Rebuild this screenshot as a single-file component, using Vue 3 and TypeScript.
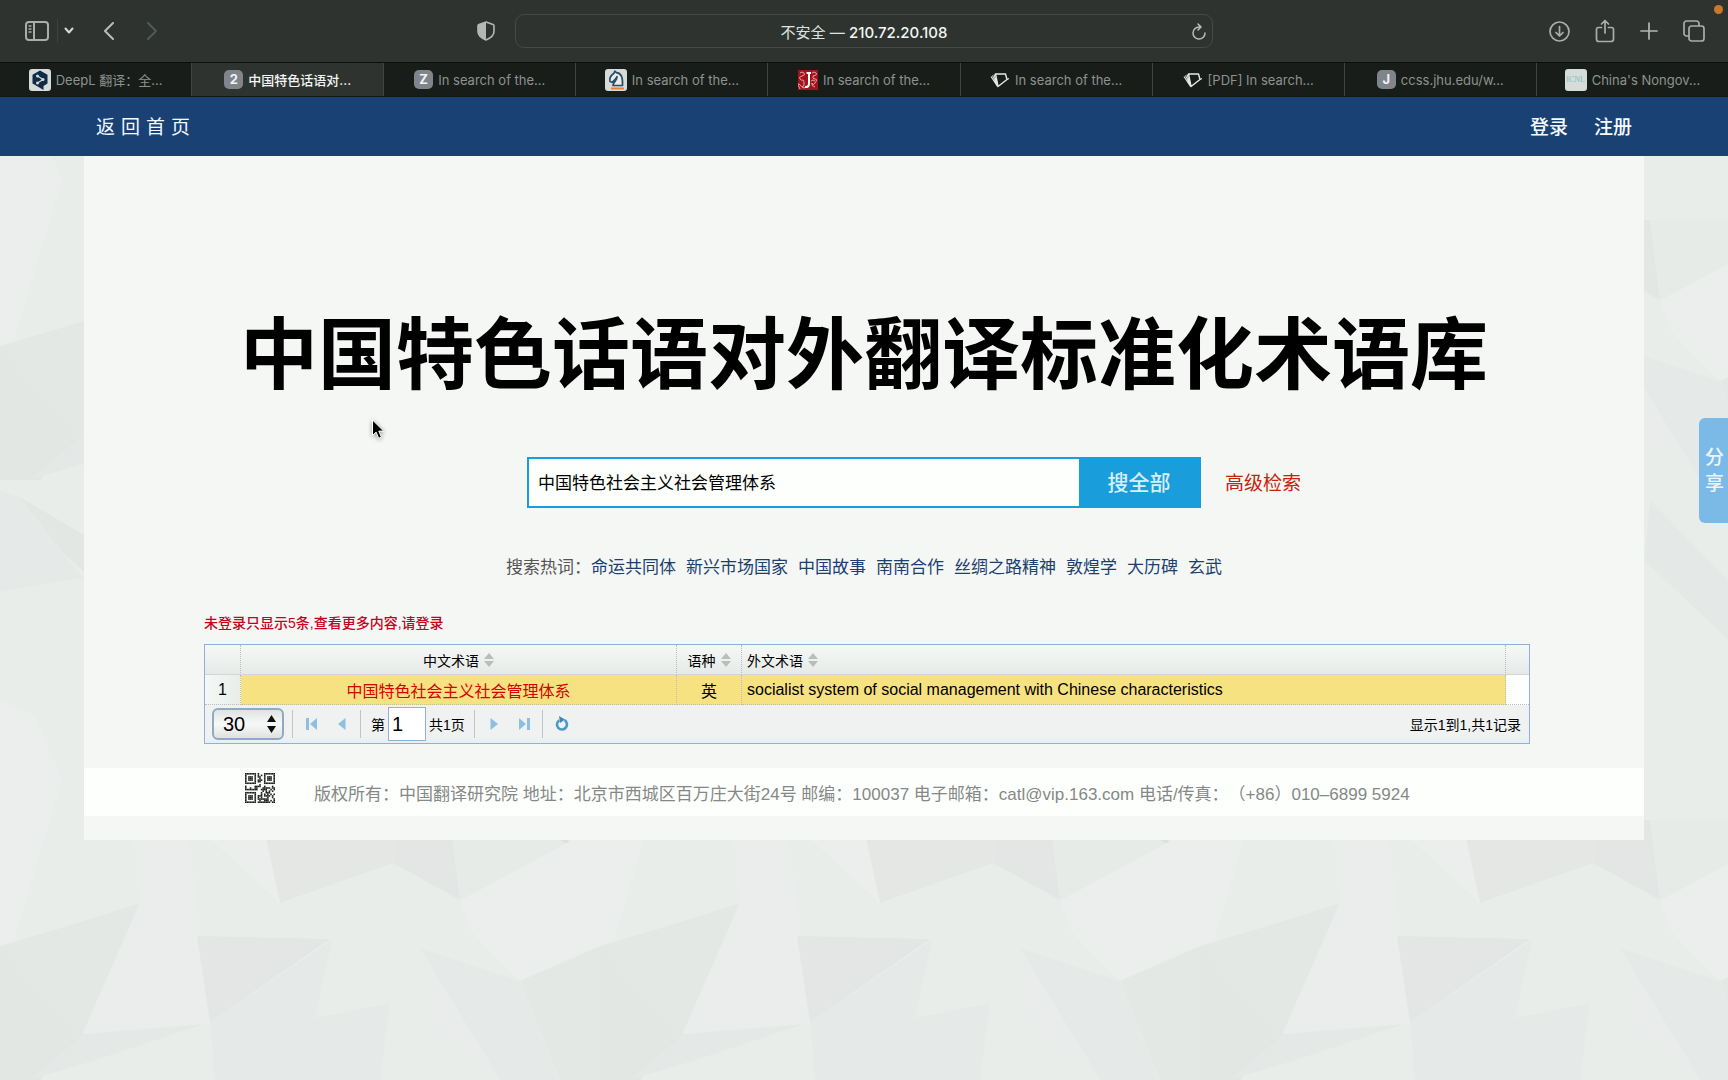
<script setup lang="ts">
import { ref } from 'vue'

interface Tab {
  label: string
  icon: 'deepl' | 'letter' | 'knight' | 'jstor' | 'book' | 'icnl'
  letter?: string
  active?: boolean
}

const tabs: Tab[] = [
  { label: 'DeepL 翻译：全...', icon: 'deepl' },
  { label: '中国特色话语对...', icon: 'letter', letter: '2', active: true },
  { label: 'In search of the...', icon: 'letter', letter: 'Z' },
  { label: 'In search of the...', icon: 'knight' },
  { label: 'In search of the...', icon: 'jstor' },
  { label: 'In search of the...', icon: 'book' },
  { label: '[PDF] In search...', icon: 'book' },
  { label: 'ccss.jhu.edu/w...', icon: 'letter', letter: 'J' },
  { label: "China's Nongov...", icon: 'icnl' },
]

const hotWords = ['命运共同体', '新兴市场国家', '中国故事', '南南合作', '丝绸之路精神', '敦煌学', '大历碑', '玄武']

const query = ref('中国特色社会主义社会管理体系')
const pageSize = ref('30')
const pageNo = ref('1')

const rows = [
  { zh: '中国特色社会主义社会管理体系', lang: '英', foreign: 'socialist system of social management with Chinese characteristics' },
]

// Paper facets of the 600 x 600 background tile
const facets = [
  { points: '0,700 34,715 62,780 14,940 0,946', fill: '#edefec' },
  { points: '0,946 84,921 140,903 84,1030 30,1080 0,1080', fill: '#e4e7e4' },
  { points: '0,946 50,1000 84,1034 40,1080 0,1080', fill: '#e2e6e3' },
  { points: '125,760 182,780 210,1022 84,1034 140,903', fill: '#ebeeeb' },
  { points: '84,1034 205,1024 90,1062 30,1080', fill: '#e4e9e6' },
  { points: '197,936 330,939 210,1022', fill: '#e2e5e2' },
  { points: '190,820 262,820 280,903', fill: '#edefec' },
  { points: '262,820 450,820 460,900 393,863 280,903', fill: '#e4e6e3' },
  { points: '393,863 400,820 450,820 460,900', fill: '#e2e5e2' },
  { points: '450,820 570,820 568,846 460,900', fill: '#e6ebe8' },
  { points: '558,838 569,838 568,845', fill: '#d9dedb' },
  { points: '568,842 600,820 600,946 520,981 470,930 460,901', fill: '#ecefec' },
  { points: '520,981 600,946 600,1080 560,1080', fill: '#e3e7e4' },
  { points: '210,1022 332,940 315,1018 390,1003 380,1080 215,1080', fill: '#e5e9e6' },
  { points: '420,948 520,981 560,1080 500,1080', fill: '#e5eae7' },
  { points: '420,950 450,1000 500,1080 430,1031', fill: '#eaedea' },
  { points: '20,497 84,535 84,572 60,550', fill: '#e3e6e3' },
  { points: '0,490 20,497 60,550 84,578 0,592', fill: '#e5e9e6' },
  { points: '450,500 528,580 528,640 444,560', fill: '#e4e9e6' },
]

// Module matrix of the small QR mark
const size = 19
const qr: { x: number; y: number }[] = []
const finder = (x: number, y: number) => {
  const edge = Math.max(Math.abs(x - 3), Math.abs(y - 3))
  return edge === 3 || edge < 2
}
let seed = 41
for (let y = 0; y < size; y++) {
  for (let x = 0; x < size; x++) {
    seed = (seed * 1103 + 12347) % 65521
    const left = x < 8
    const right = x > size - 9
    const top = y < 8
    const bottom = y > size - 9
    let on = seed % 100 < 54
    if (left && top) on = x < 7 && y < 7 && finder(x, y)
    else if (right && top) on = x > size - 8 && y < 7 && finder(x - size + 7, y)
    else if (left && bottom) on = x < 7 && y > size - 8 && finder(x, y - size + 7)
    if (on) qr.push({ x, y })
  }
}
</script>

<template>
  <div class="screen">
    <svg class="backdrop" aria-hidden="true">
      <defs>
        <pattern id="paper" x="0" y="480" width="600" height="600" patternUnits="userSpaceOnUse">
          <rect width="600" height="600" fill="#e8edea" />
          <g transform="translate(0 -480)" opacity="0.8">
            <polygon v-for="(f, i) in facets" :key="i" :points="f.points" :fill="f.fill" />
          </g>
        </pattern>
      </defs>
      <rect width="100%" height="100%" fill="url(#paper)" />
    </svg>

    <header class="browser">
      <div class="toolbar">
        <div class="tools-left">
          <button class="tool" aria-label="边栏">
            <svg width="24" height="20" viewBox="0 0 24 20" fill="none" stroke="#a9aeaa" stroke-width="2">
              <rect x="1" y="1" width="22" height="18" rx="3" />
              <path d="M9 1v18" />
              <path d="M3.500 5h3M3.500 8h3M3.500 11h3" stroke-width="1.300" />
            </svg>
          </button>
          <span class="divider"></span>
          <button class="tool chevron" aria-label="标签页组">
            <svg width="10" height="8" viewBox="0 0 10 8" fill="none" stroke="#d5d9d6" stroke-width="2" stroke-linecap="round" stroke-linejoin="round"><path d="M1.500 1.500L5 5.500l3.500-4" /></svg>
          </button>
          <button class="tool back" aria-label="后退">
            <svg width="12" height="18" viewBox="0 0 12 18" fill="none" stroke="#b9beba" stroke-width="2" stroke-linecap="round" stroke-linejoin="round"><path d="M10 1L2 9l8 8" /></svg>
          </button>
          <button class="tool forward" aria-label="前进">
            <svg width="12" height="18" viewBox="0 0 12 18" fill="none" stroke="#535955" stroke-width="2" stroke-linecap="round" stroke-linejoin="round"><path d="M2 1l8 8-8 8" /></svg>
          </button>
          <button class="tool shield" aria-label="隐私报告">
            <svg width="18" height="20" viewBox="0 0 18 20">
              <path d="M9 1l7 2.500q1 .4 1 1.500v5.500c0 4-4 6.800-8 8.500-4-1.700-8-4.500-8-8.500V5q0-1.100 1-1.500z" fill="none" stroke="#b3b8b4" stroke-width="1.600" />
              <path d="M9 1v18c-4-1.700-8-4.500-8-8.500V5q0-1.100 1-1.500z" fill="#b3b8b4" />
            </svg>
          </button>
        </div>
        <div class="address">
          <span class="address-text">不安全 — <b>210.72.20.108</b></span>
          <button class="tool reload" aria-label="重新载入">
            <svg width="14" height="17" viewBox="0 0 14 17" fill="none" stroke="#b9beba" stroke-width="1.500" stroke-linecap="round" stroke-linejoin="round"><path d="M8.500 4H7a6 6 0 1 0 6 6M6 1l3 3-3 3" /></svg>
          </button>
        </div>
        <div class="tools-right">
          <button class="tool" aria-label="下载">
            <svg width="21" height="21" viewBox="0 0 21 21" fill="none" stroke="#a9aeaa" stroke-width="1.700" stroke-linecap="round" stroke-linejoin="round"><circle cx="10.500" cy="10.500" r="9.500" /><path d="M10.500 5.500v9M7 11.500l3.500 3.500 3.500-3.500" /></svg>
          </button>
          <button class="tool" aria-label="共享">
            <svg width="20" height="24" viewBox="0 0 20 24" fill="none" stroke="#a9aeaa" stroke-width="1.700" stroke-linecap="round" stroke-linejoin="round"><path d="M6.500 8.500H3.500a2 2 0 0 0-2 2V20a2.500 2.500 0 0 0 2.500 2.500h12a2.500 2.500 0 0 0 2.500-2.500v-9.500a2 2 0 0 0-2-2h-3M10 14V1.500M6.500 5L10 1.500 13.500 5" /></svg>
          </button>
          <button class="tool" aria-label="新标签页">
            <svg width="18" height="18" viewBox="0 0 18 18" fill="none" stroke="#b3b8b4" stroke-width="1.700" stroke-linecap="round"><path d="M9 1v16M1 9h16" /></svg>
          </button>
          <button class="tool" aria-label="标签页概览">
            <svg width="22" height="22" viewBox="0 0 22 22" fill="none" stroke="#a9aeaa" stroke-width="1.700" stroke-linejoin="round"><rect x="6" y="6" width="15" height="15" rx="2.500" /><path d="M6 16H3.500A2.500 2.500 0 0 1 1 13.500v-10A2.500 2.500 0 0 1 3.500 1h10A2.500 2.500 0 0 1 16 3.500V6" /></svg>
          </button>
        </div>
        <span class="recording"></span>
      </div>

      <nav class="tabs">
        <a v-for="(tab, i) in tabs" :key="i" href="#" class="tab" :class="{ active: tab.active }">
          <span v-if="tab.icon === 'letter'" class="letter">{{ tab.letter }}</span>
          <svg v-else-if="tab.icon === 'deepl'" width="22" height="22" viewBox="0 0 22 22">
            <rect width="22" height="22" rx="3" fill="#d5dcda" />
            <path d="M11 1.500l7.500 4.300v8.700L14.500 17v4l-3.700-2.200-7.300-4.300V5.800z" fill="#0f2b46" />
            <path d="M8.500 7l5.500 3.500-5.500 3.500" fill="none" stroke="#d5dcda" stroke-width="1.200" />
            <circle cx="8.500" cy="7" r="1.500" fill="#d5dcda" /><circle cx="14" cy="10.500" r="1.500" fill="#d5dcda" /><circle cx="8.500" cy="14" r="1.500" fill="#d5dcda" />
          </svg>
          <svg v-else-if="tab.icon === 'knight'" width="22" height="22" viewBox="0 0 22 22">
            <rect width="22" height="22" rx="3" fill="#d5dcda" />
            <path d="M8 16.500c0-3 4.500-5 4-9-.8 3-3.200 4-4.700 5.800L5 12.500c-.8-3 1.500-6.500 4-8.300l.8-2 1.700 1.500c4 .3 6.500 4 6 12.800z" fill="#e9eeec" stroke="#2b4c66" stroke-width="1.700" stroke-linejoin="round" />
            <path d="M6 19.500h13" stroke="#e8803a" stroke-width="2" />
          </svg>
          <svg v-else-if="tab.icon === 'jstor'" width="20" height="20" viewBox="0 0 20 20">
            <rect width="20" height="20" fill="#a3131b" />
            <path d="M2 3q2-2 4 0t-2 3-2 3 3 1 1 4-4 1 0 4M4 17q2 2 4 0M14 3q2-2 4 0t-3 3q-1 3 2 3t0 4-3 0q-1 3 3 4M13 11q2-2 4 0" fill="none" stroke="#e3a3a3" stroke-width="1" />
            <path d="M8.500 3h4.500M11 3v10.500q0 4-4 3.500" fill="none" stroke="#fff" stroke-width="2" />
          </svg>
          <svg v-else-if="tab.icon === 'book'" width="20" height="20" viewBox="0 0 20 20" fill="none" stroke="#e6eae7" stroke-width="1.400" stroke-linejoin="round">
            <path d="M5.500 4h10l1.500 5.500L8 16.500z" />
            <path d="M4 4.500l3.500 10M2.500 5.500l5 10M1 6.500l6.500 10M17 9.500l2-1" stroke-width="1.100" />
          </svg>
          <span v-else class="icnl">ICNL</span>
          <span class="tab-label">{{ tab.label }}</span>
        </a>
      </nav>
    </header>

    <nav class="site-nav">
      <a href="#" class="home">返 回 首 页</a>
      <div class="account">
        <a href="#">登录</a>
        <a href="#">注册</a>
      </div>
    </nav>

    <main class="content">
      <h1>中国特色话语对外翻译标准化术语库</h1>

      <div class="search-row">
        <form class="search" @submit.prevent>
          <input v-model="query" type="text" aria-label="检索词" />
          <button type="submit">搜全部</button>
        </form>
        <a href="#" class="advanced">高级检索</a>
      </div>

      <div class="hot">
        <span>搜索热词：</span>
        <div class="hot-words">
          <a v-for="word in hotWords" :key="word" href="#">{{ word }}</a>
        </div>
      </div>

      <p class="notice">未登录只显示5条,查看更多内容,请登录</p>

      <section class="grid">
        <table>
          <colgroup>
            <col class="c-no" /><col class="c-zh" /><col class="c-lang" /><col /><col class="c-end" />
          </colgroup>
          <thead>
            <tr>
              <th></th>
              <th v-for="name in ['中文术语', '语种', '外文术语']" :key="name" :class="{ left: name === '外文术语' }">
                <span class="head">{{ name }}
                  <svg width="10" height="14" viewBox="0 0 10 14" fill="#b9bebb"><path d="M5 0l5 6H0zM0 8h10l-5 6z" /></svg>
                </span>
              </th>
              <th></th>
            </tr>
          </thead>
          <tbody>
            <tr v-for="(row, i) in rows" :key="row.zh">
              <td class="no">{{ i + 1 }}</td>
              <td class="term">{{ row.zh }}</td>
              <td class="hit">{{ row.lang }}</td>
              <td class="hit left">{{ row.foreign }}</td>
              <td class="rest"></td>
            </tr>
          </tbody>
        </table>

        <div class="pager">
          <div class="page-size">
            <select v-model="pageSize" aria-label="每页条数"><option>30</option></select>
            <svg width="9" height="18" viewBox="0 0 9 18" fill="#111"><path d="M4.500 0L9 7H0zM0 11h9l-4.500 7z" /></svg>
          </div>
          <span class="sep"></span>
          <div class="pair">
            <button aria-label="首页"><svg width="12" height="14" viewBox="0 0 12 14" fill="#8ebfe0"><path d="M0 1h3v12H0zM11 1v12L4 7z" /></svg></button>
            <button aria-label="上一页"><svg width="12" height="14" viewBox="0 0 12 14" fill="#8ebfe0"><path d="M9.500 1v12L2 7z" /></svg></button>
          </div>
          <span class="sep"></span>
          <label class="page-no">第<input v-model="pageNo" type="text" />共1页</label>
          <span class="sep"></span>
          <div class="pair">
            <button aria-label="下一页"><svg width="12" height="14" viewBox="0 0 12 14" fill="#8ebfe0"><path d="M2.500 1v12L10 7z" /></svg></button>
            <button aria-label="末页"><svg width="12" height="14" viewBox="0 0 12 14" fill="#8ebfe0"><path d="M9 1h3v12H9zM1 1v12l7-6z" /></svg></button>
          </div>
          <span class="sep"></span>
          <button class="refresh" aria-label="刷新">
            <svg width="14" height="16" viewBox="0 0 14 16"><path d="M9.500 4.200A5 5 0 1 1 4.300 4.300" fill="none" stroke="#4a9ac8" stroke-width="2.600" /><path d="M4 0l6 3.500-5 3.500z" fill="#3c87b8" /></svg>
          </button>
          <span class="total">显示1到1,共1记录</span>
        </div>
      </section>

      <footer>
        <svg class="qr" width="30" height="30" viewBox="0 0 19 19" role="img" aria-label="二维码">
          <rect v-for="m in qr" :key="m.x + '-' + m.y" :x="m.x" :y="m.y" width="1" height="1" fill="#1c1f1d" />
        </svg>
        <span>版权所有：中国翻译研究院 地址：北京市西城区百万庄大街24号 邮编：100037 电子邮箱：catl@vip.163.com 电话/传真：（+86）010–6899 5924</span>
      </footer>
    </main>

    <button class="share">分享</button>

    <svg class="cursor" width="16" height="22" viewBox="0 0 16 22" aria-hidden="true">
      <path d="M1.500 1v15.500l3.600-3.400 2.600 6.200 2.700-1.200-2.600-6h4.900z" fill="#000" stroke="#fff" stroke-width="1" />
    </svg>
  </div>
</template>

<style>
body {
  margin: 0;
  background: #e8edea;
}
</style>

<style scoped>
.screen {
  position: relative;
  min-height: 100vh;
  overflow: hidden;
  font-family: Inter, "Noto Sans CJK SC", sans-serif;
  font-size: 14px;
  color: #000;
}
.screen * {
  box-sizing: border-box;
}
button,
input,
select {
  font-family: inherit;
  border: 0;
  padding: 0;
  margin: 0;
  background: none;
}
a {
  text-decoration: none;
  color: inherit;
}
svg {
  display: block;
  flex: none;
}
.backdrop {
  position: absolute;
  inset: 0;
  width: 100%;
  height: 100%;
}
.browser,
.site-nav,
.content {
  position: relative;
}

/* Browser chrome */
.toolbar {
  position: relative;
  display: grid;
  grid-template-columns: 1fr 40.4% 1fr;
  align-items: center;
  height: 62px;
  background: #2e332f;
}
.tools-left {
  display: flex;
  align-items: center;
  padding: 0 20px 0 25px;
}
.tool {
  display: flex;
}
.divider {
  width: 1px;
  height: 24px;
  margin: 0 6px 0 8px;
  background: #3c423e;
}
.back {
  margin-left: 29px;
}
.forward {
  margin-left: 31px;
}
.shield {
  margin-left: auto;
}
.address {
  display: flex;
  align-items: center;
  height: 34px;
  padding: 0 6px 0 20px;
  border: 1px solid #444a46;
  border-radius: 9px;
  color: #dfe3e0;
  font-size: 15px;
}
.address-text {
  flex: 1;
  text-align: center;
}
.address b {
  font-weight: 500;
  color: #f3f6f4;
}
.tools-right {
  display: flex;
  align-items: center;
  justify-content: flex-end;
  gap: 25px;
  padding-right: 23px;
}
.recording {
  position: absolute;
  top: 5px;
  right: 5px;
  width: 9px;
  height: 9px;
  border-radius: 50%;
  background: #c9782a;
}
.tabs {
  display: flex;
  height: 35px;
  background: #191d1a;
  border-top: 1px solid #0c0f0d;
  border-bottom: 1px solid #10161b;
}
.tab {
  flex: 1 1 0;
  min-width: 0;
  display: flex;
  align-items: center;
  justify-content: center;
  gap: 5px;
  border-left: 1px solid #3f4541;
  color: #8d928e;
  font-size: 13px;
  white-space: nowrap;
}
.tab:first-child {
  border-left: 0;
}
.tab.active {
  background: #2e332f;
  color: #f3f6f4;
  font-weight: 500;
}
.letter {
  width: 19px;
  height: 19px;
  border-radius: 5px;
  background: #80858b;
  color: #f1f3f4;
  font-weight: 700;
  line-height: 19px;
  text-align: center;
}
.icnl {
  width: 22px;
  height: 22px;
  border-radius: 3px;
  background: #d5dcda;
  color: #7fbfbd;
  font: 8px/22px "Liberation Serif", serif;
  text-align: center;
}

/* Site navigation */
.site-nav {
  display: flex;
  align-items: center;
  justify-content: space-between;
  height: 59px;
  padding: 0 96px 2px;
  background: #194173;
  color: #f4f9fd;
  font-size: 19px;
}
.home {
  font-family: "DejaVu Sans", "Noto Sans CJK SC", sans-serif;
}
.account {
  display: flex;
  gap: 26px;
  font-weight: 500;
}

/* Content sheet */
.content {
  margin: 0 84px;
  padding: 160px 0 24px;
  background: #f5f7f5;
  font-family: "Liberation Sans", "Noto Sans CJK SC", sans-serif;
  text-spacing-trim: space-all;
}
h1 {
  margin: 0 0 61px;
  font-size: 78px;
  line-height: 80px;
  font-weight: 700;
  text-align: center;
  white-space: nowrap;
}
.search-row {
  display: grid;
  grid-template-columns: 1fr 43.2% 1fr;
  align-items: center;
}
.search {
  grid-column: 2;
  display: flex;
  height: 51px;
  border: 2px solid #1a9edb;
}
.search input {
  flex: 1;
  min-width: 0;
  padding: 0 9px 2px;
  background: #fdfffd;
  color: #000;
  font-size: 17px;
}
.search button {
  width: 120px;
  padding-bottom: 3px;
  background: #1a9edb;
  color: #d9effa;
  font-size: 21px;
  font-weight: 500;
}
.advanced {
  margin-left: 24px;
  padding-bottom: 3px;
  color: #c8220e;
  font-size: 19px;
}
.hot {
  display: flex;
  justify-content: center;
  margin: 48px 0 33px;
  font-size: 17px;
  line-height: 24px;
  color: #555;
}
.hot-words {
  display: flex;
  gap: 10px;
  color: #1c3f70;
}
.notice {
  margin: 0 120px 11px;
  color: #c8001c;
  font-weight: 500;
  line-height: 20px;
}
.grid {
  margin: 0 114px 24px 120px;
  border: 1px solid #92afd6;
  background: #eff2f1;
}
table {
  width: 100%;
  table-layout: fixed;
  border-collapse: separate;
  border-spacing: 0;
}
.c-no {
  width: 36px;
}
.c-zh {
  width: 436px;
}
.c-lang {
  width: 65px;
}
.c-end {
  width: 23px;
}
th,
td {
  height: 30px;
  padding: 0 5px;
  border-right: 1px dotted #b9bebc;
  border-bottom: 1px solid #d3d7d4;
  text-align: center;
}
th {
  background: linear-gradient(#f5f8f7, #e6eae7);
  font-size: 14px;
  font-weight: 400;
}
th:last-child,
td:last-child {
  border-right: 0;
}
.left {
  text-align: left;
}
.head {
  display: inline-flex;
  align-items: center;
  gap: 5px;
}
td {
  border-bottom: 1px dotted #b9bebc;
  font-size: 16px;
}
.no {
  background: linear-gradient(90deg, #f5f8f7, #e9edea);
}
.term,
.hit {
  background: #f7e282;
}
.term {
  color: #d80000;
}
.rest {
  background: #fdfffd;
}
.pager {
  display: flex;
  align-items: center;
  height: 38px;
  padding: 0 8px 0 7px;
  background: linear-gradient(#eff2f1 80%, #e6f0f5);
}
.page-size {
  position: relative;
}
.page-size select {
  display: block;
  width: 72px;
  height: 32px;
  padding: 0 9px;
  appearance: none;
  border: 2px solid #92a9c4;
  border-radius: 6px;
  background: linear-gradient(#e0e3e2, #f7f9f8 50%, #dfe2e1);
  color: #000;
  font-size: 20px;
}
.page-size svg {
  position: absolute;
  top: 7px;
  right: 8px;
  pointer-events: none;
}
.sep {
  width: 1px;
  height: 28px;
  margin: 0 8px;
  background: #bfc5c2;
}
.pair {
  display: flex;
  gap: 18px;
  margin: 0 4px 0 5px;
}
.page-no {
  display: flex;
  align-items: center;
  gap: 3px;
  margin: 0 1px 0 2px;
}
.page-no input {
  width: 38px;
  height: 34px;
  padding: 0 3px;
  border: 1px solid #8fb0d8;
  background: #fff;
  color: #000;
  font-size: 20px;
}
.refresh {
  margin-left: 4px;
}
.total {
  margin-left: auto;
}
footer {
  display: flex;
  align-items: center;
  gap: 39px;
  height: 48px;
  padding: 0 161px;
  background: #fdfffd;
  color: #858886;
  font-size: 17px;
  white-space: nowrap;
}
.qr {
  margin-bottom: 8px;
}

/* Overlays */
.share {
  position: absolute;
  top: 418px;
  right: 0;
  width: 29px;
  height: 105px;
  padding: 0 4px 0 6px;
  border-radius: 6px 0 0 6px;
  background: #7bbae6;
  color: #eaf5fc;
  font-size: 19px;
  font-weight: 500;
  line-height: 26px;
}
.cursor {
  position: absolute;
  top: 419px;
  left: 371px;
  filter: drop-shadow(0 1px 2px rgba(0, 0, 0, 0.4));
}
</style>
